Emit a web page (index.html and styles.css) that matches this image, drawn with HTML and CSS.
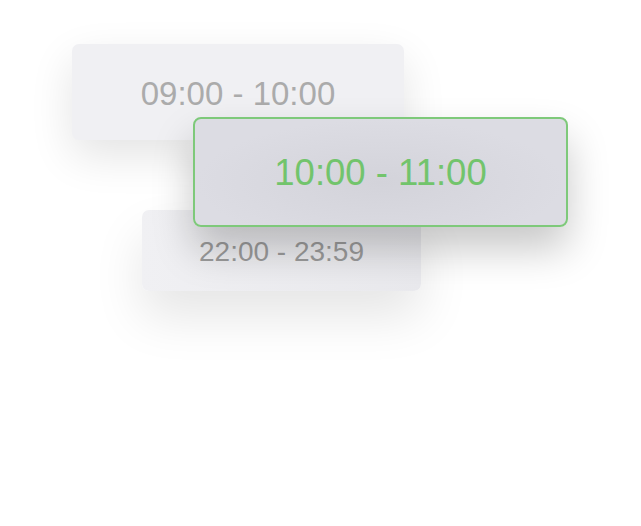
FILE: index.html
```html
<!DOCTYPE html>
<html>
<head>
<meta charset="utf-8">
<link rel="stylesheet" href="styles.css">
</head>
<body>
<div class="canvas">
  <div class="card card-a">09:00 - 10:00</div>
  <div class="card card-c">22:00 - 23:59</div>
  <div class="card card-b">10:00 - 11:00</div>
</div>
</body>
</html>
```
FILE: styles.css
```css
html, body {
  margin: 0;
  padding: 0;
  background: #ffffff;
}
.canvas {
  position: relative;
  width: 641px;
  height: 526px;
  overflow: hidden;
  font-family: "Liberation Sans", Arial, sans-serif;
}
.card {
  position: absolute;
  display: flex;
  align-items: center;
  justify-content: center;
  box-sizing: border-box;
  white-space: nowrap;
}
.card-a {
  left: 72px;
  top: 44px;
  width: 332px;
  height: 96px;
  border-radius: 7px;
  background: #f0f0f3;
  color: #ababab;
  font-size: 33px;
  padding-top: 4px;
  box-shadow: 0 16px 44px rgba(0,0,0,0.11);
}
.card-c {
  left: 142px;
  top: 210px;
  width: 279px;
  height: 81px;
  border-radius: 7px;
  background: linear-gradient(90deg, #f0f0f3 0%, #e9e9ed 100%);
  color: #9b9b9b;
  font-size: 28px;
  padding-top: 2px;
  box-shadow: 0 26px 50px rgba(0,0,0,0.10);
}
.card-b {
  left: 193px;
  top: 117px;
  width: 375px;
  height: 110px;
  border-radius: 8px;
  border: 2px solid #7ec97a;
  background: radial-gradient(ellipse at 50% 60%, #d3d3da 0%, #dcdce3 70%);
  color: #72c46c;
  font-size: 36.5px;
  padding-top: 2px;
  box-shadow: 0 22px 40px rgba(0,0,0,0.22);
}
```
